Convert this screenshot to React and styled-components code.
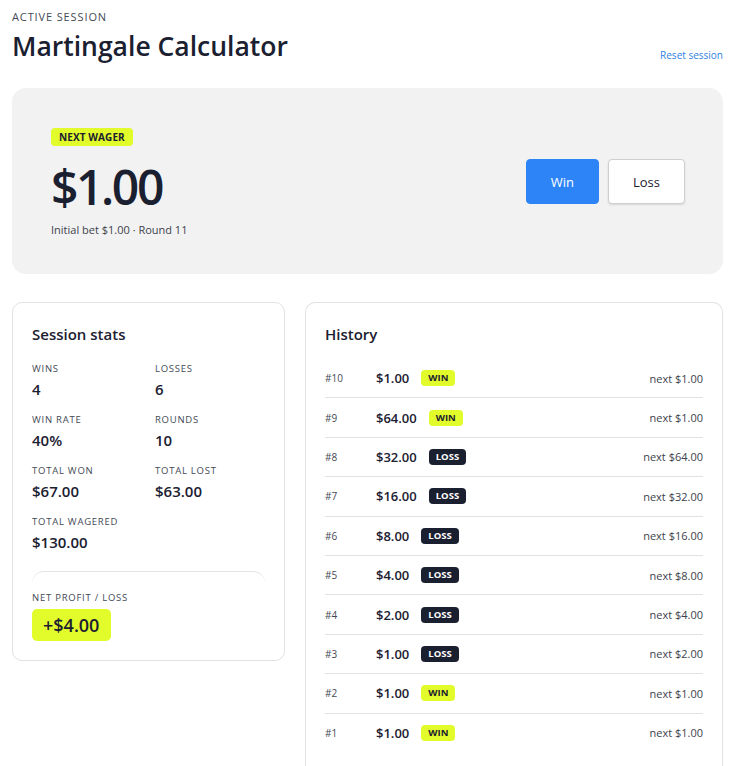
import React from 'react';
import styled, { createGlobalStyle } from 'styled-components';

const GlobalStyle = createGlobalStyle`
  body {
    margin: 0;
    background: #ffffff;
    font-family: 'Open Sans', 'Noto Sans', sans-serif;
    color: #1b2030;
  }
`;

const Page = styled.div`
  padding: 10px 31px 0 12px;
`;

const Header = styled.header`
  display: flex;
  justify-content: space-between;
  align-items: flex-end;
`;

const Eyebrow = styled.div`
  font-size: 11px;
  letter-spacing: 0.08em;
  color: #444a55;
  text-transform: uppercase;
  line-height: 14px;
`;

const Title = styled.h1`
  margin: 5px 0 0;
  font-size: 26.5px;
  font-weight: 600;
  line-height: 34px;
  color: #1b2030;
`;

const ResetLink = styled.button`
  background: none;
  border: none;
  padding: 0;
  font: inherit;
  font-size: 10px;
  color: #2f7fe0;
  cursor: pointer;
  margin-bottom: 1px;
`;

const Hero = styled.section`
  margin-top: 25px;
  background: #f2f2f2;
  border-radius: 14px;
  padding: 40px 38px 37px 39px;
  display: flex;
  justify-content: space-between;
  align-items: center;
`;

const HeroInfo = styled.div`
  display: flex;
  flex-direction: column;
  align-items: flex-start;
`;

const Pill = styled.span`
  background: #e2fb2b;
  color: #1b2030;
  font-size: 10px;
  font-weight: 700;
  letter-spacing: 0.01em;
  padding: 2px 8px;
  border-radius: 4px;
  line-height: 14px;
`;

const BigAmount = styled.div`
  font-size: 48px;
  font-weight: 600;
  line-height: 62px;
  margin-top: 10px;
  letter-spacing: -0.05em;
`;

const SubText = styled.div`
  font-size: 11px;
  color: #3d424c;
  margin-top: 4px;
  line-height: 15px;
`;

const Actions = styled.div`
  display: flex;
  gap: 9px;
  margin-top: -2px;
`;

const ActionButton = styled.button`
  height: 45px;
  padding: 0 24px;
  font: inherit;
  font-size: 13px;
  border-radius: 4px;
  cursor: pointer;
  border: 1px solid ${(p) => (p.$primary ? '#2d84f7' : '#cfcfcf')};
  background: ${(p) => (p.$primary ? '#2d84f7' : '#ffffff')};
  color: ${(p) => (p.$primary ? '#ffffff' : '#1b2030')};
  box-shadow: ${(p) => (p.$primary ? 'none' : '0 1px 2px rgba(0,0,0,0.12)')};
`;

const Columns = styled.div`
  display: grid;
  grid-template-columns: 273px 1fr;
  gap: 20px;
  margin-top: 28px;
  align-items: start;
`;

const Card = styled.section`
  border: 1px solid #e2e2e2;
  border-radius: 10px;
  padding: 19px 19px 19px;
  background: #ffffff;
`;

const CardTitle = styled.h2`
  margin: 2px 0 0;
  font-size: 15px;
  font-weight: 600;
  line-height: 20px;
`;

const StatGrid = styled.div`
  display: grid;
  grid-template-columns: 123px 1fr;
  row-gap: 14px;
  margin-top: 18px;
`;

const Stat = styled.div`
  display: flex;
  flex-direction: column;
`;

const StatLabel = styled.span`
  font-size: 9.5px;
  letter-spacing: 0.08em;
  color: #444a55;
  text-transform: uppercase;
  line-height: 14px;
`;

const StatValue = styled.span`
  font-size: 15px;
  font-weight: 600;
  line-height: 20px;
  margin-top: 3px;
`;

const NetBox = styled.div`
  margin-top: 19px;
  border-top: 1px solid #e4e4e4;
  border-radius: 12px 12px 0 0;
  padding-top: 12px;
`;

const NetValue = styled.span`
  display: inline-block;
  margin-top: 3px;
  background: #e2fb2b;
  border-radius: 5px;
  padding: 4px 12px 4px 11px;
  font-size: 18px;
  font-weight: 600;
  line-height: 24px;
`;

const HistoryCard = styled(Card)`
  padding-bottom: 0;
  border-bottom: none;
  border-radius: 10px 10px 0 0;
  min-height: 445px;
`;

const HistoryList = styled.ul`
  list-style: none;
  margin: 15px 0 0;
  padding: 0;
`;

const HistoryRow = styled.li`
  display: flex;
  align-items: center;
  height: 38.4px;
  border-bottom: 1px solid #e2e2e2;

  &:last-child {
    border-bottom: none;
  }
`;

const RoundNo = styled.span`
  width: 51px;
  font-size: 10px;
  color: #444a55;
`;

const RowAmount = styled.span`
  font-size: 13px;
  font-weight: 600;
`;

const Outcome = styled.span`
  margin-left: 12px;
  font-size: 9.5px;
  font-weight: 700;
  line-height: 14px;
  padding: 1px 7px;
  border-radius: 4px;
  background: ${(p) => (p.$win ? '#e2fb2b' : '#1b2030')};
  color: ${(p) => (p.$win ? '#1b2030' : '#ffffff')};
`;

const NextBet = styled.span`
  margin-left: auto;
  font-size: 11px;
  color: #3d424c;
`;

const stats = [
  ['Wins', '4'],
  ['Losses', '6'],
  ['Win rate', '40%'],
  ['Rounds', '10'],
  ['Total won', '$67.00'],
  ['Total lost', '$63.00'],
  ['Total wagered', '$130.00'],
];

const history = [
  { n: 10, bet: '$1.00', win: true, next: '$1.00' },
  { n: 9, bet: '$64.00', win: true, next: '$1.00' },
  { n: 8, bet: '$32.00', win: false, next: '$64.00' },
  { n: 7, bet: '$16.00', win: false, next: '$32.00' },
  { n: 6, bet: '$8.00', win: false, next: '$16.00' },
  { n: 5, bet: '$4.00', win: false, next: '$8.00' },
  { n: 4, bet: '$2.00', win: false, next: '$4.00' },
  { n: 3, bet: '$1.00', win: false, next: '$2.00' },
  { n: 2, bet: '$1.00', win: true, next: '$1.00' },
  { n: 1, bet: '$1.00', win: true, next: '$1.00' },
];

export default function App() {
  return (
    <Page>
      <GlobalStyle />
      <Header>
        <div>
          <Eyebrow>Active session</Eyebrow>
          <Title>Martingale Calculator</Title>
        </div>
        <ResetLink>Reset session</ResetLink>
      </Header>

      <Hero>
        <HeroInfo>
          <Pill>NEXT WAGER</Pill>
          <BigAmount>$1.00</BigAmount>
          <SubText>Initial bet $1.00 · Round 11</SubText>
        </HeroInfo>
        <Actions>
          <ActionButton $primary>Win</ActionButton>
          <ActionButton>Loss</ActionButton>
        </Actions>
      </Hero>

      <Columns>
        <Card>
          <CardTitle>Session stats</CardTitle>
          <StatGrid>
            {stats.map(([label, value]) => (
              <Stat key={label}>
                <StatLabel>{label}</StatLabel>
                <StatValue>{value}</StatValue>
              </Stat>
            ))}
          </StatGrid>
          <NetBox>
            <StatLabel>Net profit / loss</StatLabel>
            <div>
              <NetValue>+$4.00</NetValue>
            </div>
          </NetBox>
        </Card>

        <HistoryCard>
          <CardTitle>History</CardTitle>
          <HistoryList>
            {history.map((h) => (
              <HistoryRow key={h.n}>
                <RoundNo>#{h.n}</RoundNo>
                <RowAmount>{h.bet}</RowAmount>
                <Outcome $win={h.win}>{h.win ? 'WIN' : 'LOSS'}</Outcome>
                <NextBet>next {h.next}</NextBet>
              </HistoryRow>
            ))}
          </HistoryList>
        </HistoryCard>
      </Columns>
    </Page>
  );
}
